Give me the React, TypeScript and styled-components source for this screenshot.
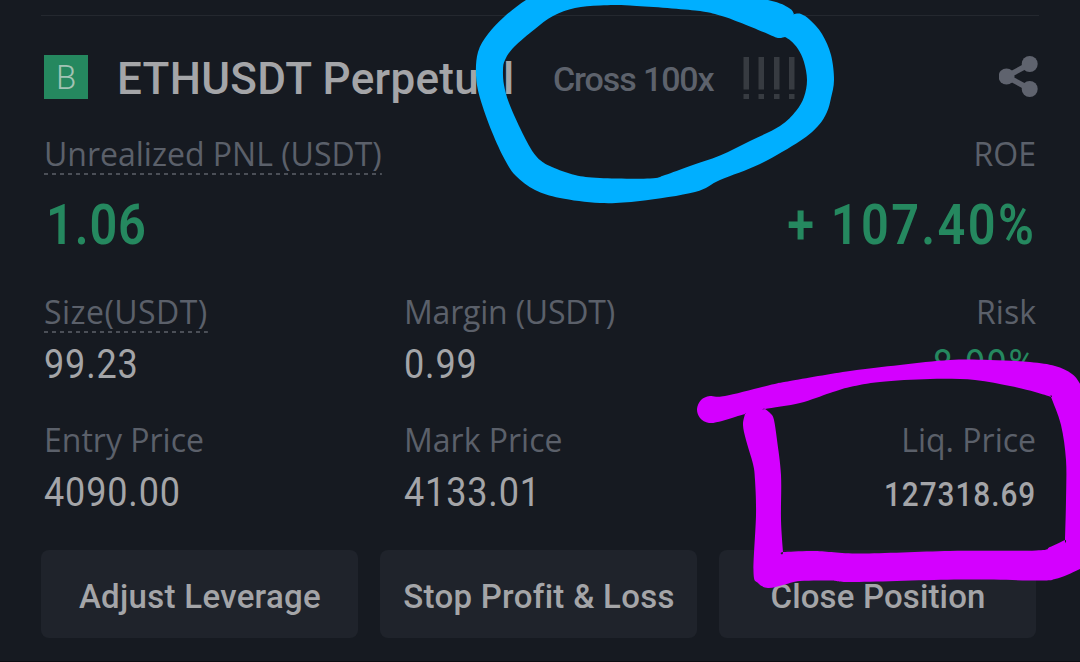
import React from 'react'
import styled, { createGlobalStyle } from 'styled-components'

const GlobalStyle = createGlobalStyle`
  body {
    margin: 0;
    background: #161a21;
  }
`

const labelFont = `'Open Sans', 'Noto Sans', sans-serif`
const numberFont = `Roboto, 'Liberation Sans', sans-serif`

const Card = styled.main`
  position: relative;
  box-sizing: border-box;
  width: 1080px;
  height: 662px;
  padding: 15px 44px 0;
  overflow: hidden;
  background: #161a21;
  border-bottom: 1px solid #0c0d12;
  font-family: ${labelFont};
  white-space: nowrap;
`

const Divider = styled.div`
  height: 1px;
  margin: 0 -3px 39px;
  background: #24282f;
`

const Header = styled.header`
  display: flex;
  align-items: center;
  height: 44px;
  margin-bottom: 35px;
`

const SideBadge = styled.span`
  width: 44px;
  height: 44px;
  margin-right: 29px;
  background: #25885f;
  color: #a2c3b4;
  font: 300 33px/45px ${numberFont};
  text-align: center;
`

const Symbol = styled.h1`
  width: 436px;
  margin: 0;
  padding-top: 4px;
  color: #a4a5a8;
  font: 500 44px/48px ${numberFont};
  letter-spacing: 0.3px;
`

const Leverage = styled.span`
  width: 190px;
  padding-top: 4px;
  color: #5d626c;
  font: 500 34px/48px ${numberFont};
  letter-spacing: -1.1px;
`

const ShareButton = styled.button`
  display: flex;
  margin: 0 -3px 0 auto;
  padding: 0;
  border: 0;
  background: none;
`

const StatsRow = styled.section<{ $gap: number }>`
  display: grid;
  grid-template-columns: 360px 360px minmax(0, 1fr);
  margin-bottom: ${p => p.$gap}px;
`

const Stat = styled.div<{ $right?: boolean }>`
  display: flex;
  flex-direction: column;
  align-items: ${p => (p.$right ? 'flex-end' : 'flex-start')};
`

const Label = styled.span<{ $dashed?: boolean; $track?: number }>`
  height: 41px;
  color: #5b606a;
  font-size: 32px;
  line-height: 40px;
  letter-spacing: ${p => p.$track ?? 0}px;
  background: ${p => p.$dashed
    ? 'repeating-linear-gradient(90deg, #4b4f57 0 4px, transparent 4px 8px) bottom / 100% 2px no-repeat'
    : 'none'};
`

// figures are drawn slightly condensed
const Value = styled.span<{ $track?: number; $green?: boolean }>`
  margin-top: 7px;
  color: ${p => (p.$green ? '#25885f' : '#a4a5a8')};
  font: 400 40px/50px ${numberFont};
  letter-spacing: ${p => p.$track ?? 0.95}px;
  transform: scaleX(0.9);
  transform-origin: left;

  ${Stat}:last-child & {
    transform-origin: right;
  }
`

const SmallValue = styled(Value)`
  margin-top: 10px;
  font-size: 33px;
  font-weight: 500;
  line-height: 47px;
`

const BigValue = styled(Value)`
  margin: 20px 0 0 2px;
  font-size: 56px;
  font-weight: 600;
  line-height: 60px;
  transform: scaleX(0.87);
`

const Actions = styled.footer`
  display: grid;
  grid-template-columns: repeat(3, 317px);
  gap: 22px;
  margin-left: -3px;
`

const ActionButton = styled.button<{ $track?: number }>`
  height: 88px;
  padding: 5px 0 0 1px;
  border: 0;
  border-radius: 8px;
  background: #1f232b;
  color: #a4a5a8;
  font: 500 33px/40px ${numberFont};
  letter-spacing: ${p => p.$track ?? 0.3}px;
`

const Markup = styled.svg`
  position: absolute;
  inset: 0;
  pointer-events: none;
`

type Point = [number, number]

// closed curve through all points; a repeated point makes a corner
const smooth = (points: Point[]) => {
  const n = points.length
  const at = (i: number) => points[(i + n) % n]
  let d = `M${at(0)}`
  for (let i = 0; i < n; i++) {
    const [a, b, c, e] = [at(i - 1), at(i), at(i + 1), at(i + 2)]
    d += `C${b[0] + (c[0] - a[0]) / 6},${b[1] + (c[1] - a[1]) / 6} ${c[0] - (e[0] - b[0]) / 6},${c[1] - (e[1] - b[1]) / 6} ${c}`
  }
  return d + 'Z'
}

const blueOuter: Point[] = [
  [526, 0], [504, 17], [488, 34], [478, 52], [476, 75], [480, 98], [492, 132], [505, 160],
  [516, 176], [535, 190], [560, 198], [600, 203], [640, 201], [695, 192], [720, 180], [760, 164],
  [800, 141], [818, 126], [827, 112], [831, 98], [834, 80], [831, 55], [822, 34], [810, 20],
  [801, 14], [794, 14], [794, 14], [789, 8], [768, 0], [700, -12], [600, -18], [550, -12]
]

const blueInner: Point[] = [
  [785, 37], [785, 37], [778, 38], [768, 34], [740, 22.5], [720, 15.5], [695, 10.5], [630, 5.5],
  [600, 5.5], [575, 8], [553, 16], [535, 29], [514, 47], [505, 60], [503, 70], [504, 85],
  [509, 103], [520, 128], [531, 149], [540, 160], [552, 167], [575, 175], [600, 178], [650, 178.5],
  [665, 175], [690, 166], [720, 155.5], [750, 141], [780, 126], [796, 111], [804, 97], [807, 80],
  [804, 62], [798, 49], [791, 41]
]

const purpleOuter: Point[] = [
  [697, 409], [701, 400], [710, 396], [725, 396], [770, 385], [790, 381], [850, 371], [900, 365],
  [950, 360], [990, 360], [1030, 362], [1055, 366], [1072, 374], [1082, 387], [1100, 420],
  [1100, 560], [1080, 569], [1067, 575], [1055, 579], [1040, 580.5], [960, 579.5], [855, 582],
  [830, 580.5], [800, 581], [783, 585], [768, 588], [758, 583], [753.5, 572], [756, 515],
  [755, 480], [753, 464], [746, 440], [743, 425], [745, 414], [745, 414], [735, 417], [722, 421],
  [709, 423], [700, 418]
]

const purpleInner: Point[] = [
  [765, 409], [765, 409], [800, 403], [830, 393], [850, 387], [880, 382], [930, 379], [975, 380],
  [1010, 386], [1035, 392], [1051, 397], [1051, 397], [1061, 425], [1066, 460], [1066, 500],
  [1065, 540], [1065, 540], [1050, 547], [1036, 550.5], [950, 551], [860, 553.5], [815, 551],
  [783, 552], [783, 552], [781, 520], [781, 475], [777, 440], [774, 420], [771, 414]
]

const RiskBars = () => (
  <svg width="52" height="44" fill="#373b41">
    {[0.5, 15.5, 31, 46].map(x => (
      <React.Fragment key={x}>
        <rect x={x} y="2" width="5.5" height="32.5" />
        <rect x={x} y="39" width="5.5" height="5" />
      </React.Fragment>
    ))}
  </svg>
)

const ShareIcon = () => (
  <svg width="40" height="44" fill="#5f636e">
    <path d="M30.7 9 7.5 21.5 30.7 34" fill="none" stroke="#5f636e" strokeWidth="5.5" />
    <circle cx="30.7" cy="9" r="8" />
    <circle cx="7.5" cy="21.5" r="8" />
    <circle cx="30.7" cy="34" r="8" />
  </svg>
)

const App : React.FC = () => {
  return (
    <>
      <GlobalStyle />
      <Card>
        <Divider />
        <Header>
          <SideBadge>B</SideBadge>
          <Symbol>ETHUSDT Perpetual</Symbol>
          <Leverage>Cross 100x</Leverage>
          <RiskBars />
          <ShareButton aria-label="Share"><ShareIcon /></ShareButton>
        </Header>

        <StatsRow $gap={37}>
          <Stat>
            <Label $dashed>Unrealized PNL (USDT)</Label>
            <BigValue $green $track={1}>1.06</BigValue>
          </Stat>
          <Stat />
          <Stat $right>
            <Label>ROE</Label>
            <BigValue $green $track={2.7}>+ 107.40%</BigValue>
          </Stat>
        </StatsRow>

        <StatsRow $gap={30}>
          <Stat>
            <Label $dashed $track={0.45}>Size(USDT)</Label>
            <Value>99.23</Value>
          </Stat>
          <Stat>
            <Label $track={-0.2}>Margin (USDT)</Label>
            <Value>0.99</Value>
          </Stat>
          <Stat $right>
            <Label>Risk</Label>
            <Value $green $track={1.6}>8.99%</Value>
          </Stat>
        </StatsRow>

        <StatsRow $gap={32}>
          <Stat>
            <Label>Entry Price</Label>
            <Value>4090.00</Value>
          </Stat>
          <Stat>
            <Label>Mark Price</Label>
            <Value>4133.01</Value>
          </Stat>
          <Stat $right>
            <Label>Liq. Price</Label>
            <SmallValue $track={1.1}>127318.69</SmallValue>
          </Stat>
        </StatsRow>

        <Actions>
          <ActionButton>Adjust Leverage</ActionButton>
          <ActionButton>Stop Profit &amp; Loss</ActionButton>
          <ActionButton $track={0.15}>Close Position</ActionButton>
        </Actions>

        <Markup width="1080" height="662" fillRule="evenodd">
          <path fill="#00afff" d={smooth(blueOuter) + smooth(blueInner)} />
          <path fill="#d400ff" d={smooth(purpleOuter) + smooth(purpleInner)} />
        </Markup>
      </Card>
    </>
  )
}

export default App
